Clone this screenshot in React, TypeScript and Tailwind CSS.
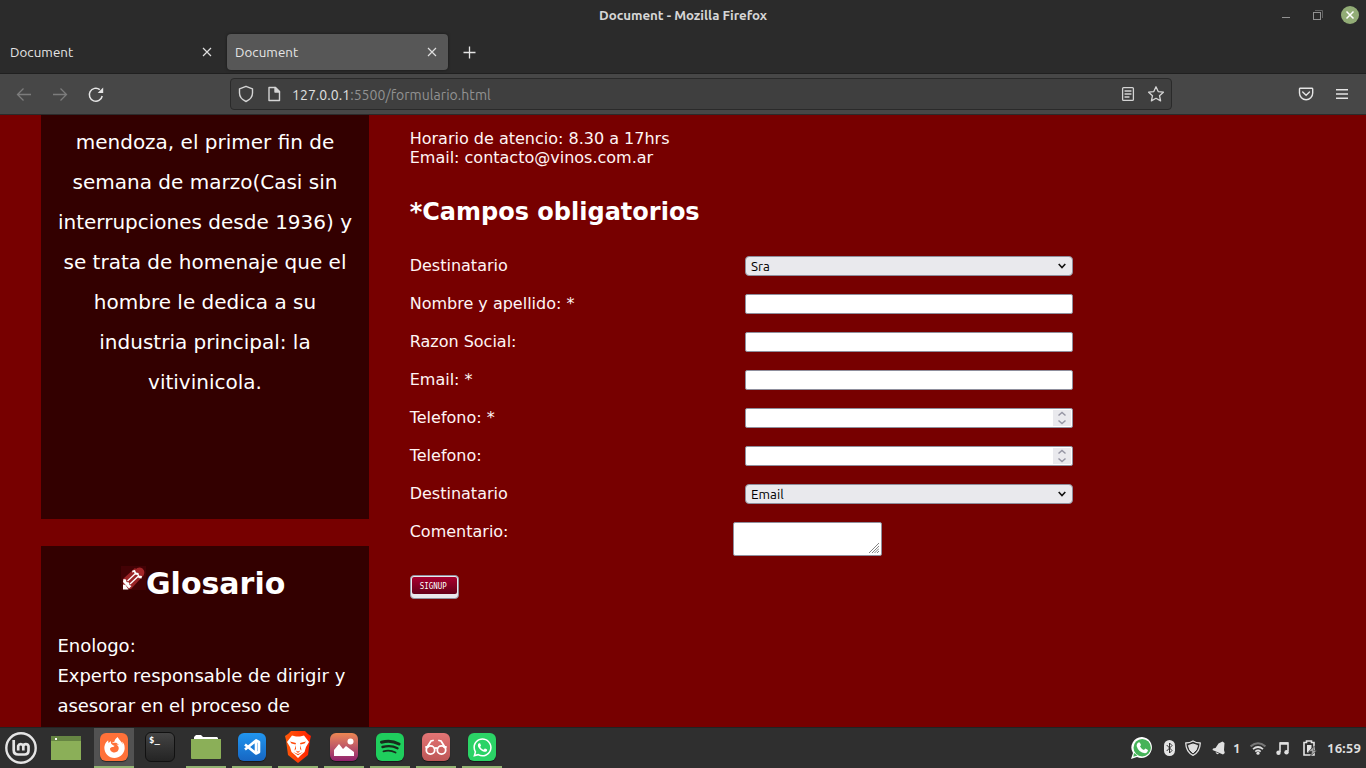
import React from "react";
import { FaWhatsapp } from "react-icons/fa";
import { SiFirefoxbrowser } from "react-icons/si";

const uiFont = "font-['Ubuntu','Noto_Sans',sans-serif]";

function Cross({ className }: { className: string }) {
  return (
    <svg className={className} viewBox="0 0 10 10" fill="none" stroke="currentColor" strokeWidth="1.2">
      <path d="M1 1L9 9M9 1L1 9" />
    </svg>
  );
}

function TitleBar() {
  return (
    <div className="flex h-[30px] items-center">
      <div className="w-[200px]" />
      <div className="flex-1 pt-px text-center text-[13.333px] font-semibold leading-[30px] text-[#d6d6d6]">
        <span className="tracking-[-0.03px]">Document - Mozilla Firefox</span>
      </div>
      <div className="flex w-[200px] items-center justify-end pr-[7px]">
        <svg className="h-[18px] w-[78px]" viewBox="0 0 78 18" fill="none">
          <path d="M1 11.500H9" stroke="#929292" />
          <path d="M34 4.500H41.500V12" stroke="#626262" />
          <rect x="32.500" y="6.500" width="7" height="7" stroke="#929292" />
          <circle cx="69" cy="9" r="9" fill="#92ac76" />
          <path d="M65.500 5.500L72.500 12.500M72.500 5.500L65.500 12.500" stroke="#fff" strokeWidth="1.500" />
        </svg>
      </div>
    </div>
  );
}

function Tab({ active }: { active?: boolean }) {
  return (
    <div
      className={
        active
          ? "flex h-9 w-[221px] items-center justify-between rounded-[4px] bg-[#575757] pl-2 pr-[11px] shadow-[0_0_3px_rgba(0,0,0,0.5)]"
          : "flex h-9 w-[221px] items-center justify-between pl-2 pr-[11px]"
      }
    >
      <span className="pt-px text-[13.333px] tracking-[0.08px] text-[#e6e6e6]">Document</span>
      <Cross className="size-[10px] text-[#dedede]" />
    </div>
  );
}

function NavBar() {
  return (
    <div className="flex h-[41px] items-center border-b border-[#2b2b2b] bg-[#474747] pr-4 text-[#dddddd]">
      <svg className="h-5 w-[230px]" viewBox="0 0 230 20" fill="none" strokeWidth="1.3">
        <path d="M31 10.500H17.500M23.500 4.500L17.500 10.500L23.500 16.500" stroke="#7c7c7c" />
        <path d="M53 10.500H66.500M60.500 4.500L66.500 10.500L60.500 16.500" stroke="#7c7c7c" />
        <path d="M102.200 12A6.500 6.500 0 1 1 99.800 5.600" stroke="#e6e6e6" strokeWidth="1.5" />
        <path d="M103.200 3.500V9H97.700Z" fill="#e6e6e6" />
      </svg>
      <div className="flex h-8 w-[942px] items-center rounded-[4px] border border-[#2a2a2a] bg-[#3f3f3f]">
        <svg className="h-5 w-[61px]" viewBox="0 0 61 20" fill="none" stroke="#d4d4d4" strokeWidth="1.400" strokeLinejoin="round">
          <path d="M15 2.300L21.500 4.800V9C21.500 12.500 19.500 15.500 15 17.500C10.500 15.500 8.500 12.500 8.500 9V4.800Z" />
          <path d="M38 3.500H44.500L48.500 7.500V16.500H38Z" />
          <path d="M44 3.500V8H48.500Z" fill="#d4d4d4" />
        </svg>
        <div className="flex-1 pt-px text-[14px] leading-5 text-[#929292]">
          <span className="tracking-[0.05px]">
            <span className="text-[#e0e0e0]">127.0.0.1</span>:5500/formulario.html
          </span>
        </div>
        <svg className="h-5 w-[56px]" viewBox="0 0 56 20" fill="none" stroke="#d4d4d4" strokeWidth="1.300" strokeLinejoin="round">
          <rect x="7.600" y="3.600" width="10.800" height="12.800" rx="1" />
          <path d="M10 7H16M10 10H16M10 13H14" strokeLinecap="round" />
          <path d="M41 2.800L43.200 7.600L48.400 8.200L44.500 11.700L45.600 16.900L41 14.300L36.400 16.900L37.500 11.700L33.600 8.200L38.800 7.600Z" />
        </svg>
      </div>
      <svg className="ml-auto h-5 w-[52px]" viewBox="0 0 52 20" fill="none" stroke="#e4e4e4" strokeWidth="1.400">
        <path d="M2 4.200H14.200Q14.700 4.200 14.700 5.200V9A6.600 6.800 0 0 1 1.500 9V5.200Q1.500 4.200 2 4.200Z" />
        <path d="M4.700 8L8.100 11.200L11.500 8" strokeLinecap="round" />
        <path d="M38 5.800H50M38 10H50M38 14.200H50" />
      </svg>
    </div>
  );
}

function SelectBox({ value }: { value: string }) {
  return (
    <div className={`flex h-5 w-[328px] items-center justify-between rounded-[4px] border border-[#8f8f9d] bg-[#e9e9ed] pl-[5px] pr-[6px] text-[13.333px] text-black ${uiFont}`}>
      <span className="tracking-[0.05px]">{value}</span>
      <svg className="h-2 w-2" viewBox="0 0 8 8" fill="none" stroke="#111" strokeWidth="1.600">
        <path d="M.7 2L4 5.500L7.300 2" />
      </svg>
    </div>
  );
}

function InputBox({ spinner }: { spinner?: boolean }) {
  return (
    <div className="flex h-5 w-[328px] justify-end rounded-[2px] border border-[#8f8f9d] bg-white p-px">
      {spinner && (
        <svg className="h-4 w-[18px] bg-[#e9e9ed]" viewBox="0 0 18 16" fill="none" stroke="#9696a4" strokeWidth="1.500">
          <path d="M5.500 5.500L9 2.500L12.500 5.500M5.500 10.500L9 13.500L12.500 10.500" />
        </svg>
      )}
    </div>
  );
}

const fields = [
  { label: "Destinatario", value: "Sra" },
  { label: "Nombre y apellido: *" },
  { label: "Razon Social:" },
  { label: "Email: *" },
  { label: "Telefono: *", spinner: true },
  { label: "Telefono:", spinner: true },
  { label: "Destinatario", value: "Email" },
];

function ContactForm() {
  return (
    <section className="ml-[40.700px] pt-[14px] text-base leading-[19px] text-[#fff5f5]">
      <p>Horario de atencio: 8.30 a 17hrs</p>
      <p>Email: contacto@vinos.com.ar</p>
      <h2 className="mt-[31px] text-2xl font-bold leading-7 text-white">*Campos obligatorios</h2>
      <div className="mt-[30px]">
        {fields.map((f, i) => (
          <div key={i} className="flex h-[38px] items-start">
            <label className="w-[335.300px]">{f.label}</label>
            {f.value ? <SelectBox value={f.value} /> : <InputBox spinner={f.spinner} />}
          </div>
        ))}
        <div className="flex h-[53px] items-start">
          <label className="w-[323.300px]">Comentario:</label>
          <div className="flex h-[34px] w-[149px] items-end justify-end rounded-[2px] border border-[#8f8f9d] bg-white p-[2px]">
            <svg className="h-[10px] w-[10px]" viewBox="0 0 10 10" stroke="#777" strokeWidth=".9">
              <path d="M0 10L10 0M3 10L10 3M5.500 10L10 5.500M8 10L10 8" />
            </svg>
          </div>
        </div>
      </div>
      <button className="flex h-6 w-[49px] rounded-[4px] border border-[#8f8f9d] bg-[#e9e9ed] px-px pt-px">
        <span className="flex h-[17px] w-full items-center justify-center rounded-[2px] bg-linear-to-b from-[#a9002e] to-[#650018]">
          <span className="-ml-[2px] scale-x-[.83] whitespace-nowrap font-['DejaVu_Sans_Mono',monospace] text-[9px] leading-[10px] text-white">SIGNUP</span>
        </span>
      </button>
    </section>
  );
}

function Sidebar() {
  return (
    <aside className="ml-[41px] flex w-[328px] flex-col gap-[27px] text-white">
      <div className="flex h-[404px] flex-none flex-col bg-[#330000] pt-[7px] text-center text-xl leading-10">
        <span>mendoza, el primer fin de</span>
        <span>semana de marzo(Casi sin</span>
        <span>interrupciones desde 1936) y</span>
        <span>se trata de homenaje que el</span>
        <span>hombre le dedica a su</span>
        <span>industria principal: la</span>
        <span>vitivinicola.</span>
      </div>
      <div className="flex-none bg-[#330000] pb-10 pl-[16.400px]">
        <div className="flex h-[85px] items-start pl-[63.600px] pt-5">
          <svg className="h-6 w-[25px] bg-[#430205]" viewBox="0 0 25 24">
            <path d="M2 13L14 2L22 10L10 23H2Z" fill="#9a2427" />
            <path d="M14 4Q17.500 0 21.500 2.500Q25 6 22 10.500Z" fill="#a32528" />
            <path d="M2 23.500V18.500L4.500 19L7.500 23.500Z" fill="#fff" />
            <path d="M2.500 13L5 13.500L5.500 16L8 16.500L8.500 19L10.500 20L8 22.500L2 16Z" fill="#fff" />
            <path d="M11.500 4.500L14 4L15 6.500L17.500 7L18 9.500L21 10L20.500 12.500L17.500 12L16.500 9L14 8.500L13 6L11 6.500Z" fill="#fff" />
            <path d="M6.500 15L14.500 7.500M9 18L17.500 10" fill="none" stroke="#fff" strokeWidth="1.300" />
          </svg>
          <h2 className="text-[30px] font-bold leading-[35px]">Glosario</h2>
        </div>
        <div className="flex flex-col text-lg leading-[30px]">
          <span>Enologo:</span>
          <span>Experto responsable de dirigir y</span>
          <span>asesorar en el proceso de</span>
        </div>
      </div>
    </aside>
  );
}

function Slot({ open, active, children }: { open?: boolean; active?: boolean; children: React.ReactNode }) {
  const border = open ? "border-[#92b372]" : "border-transparent";
  const bg = active ? "bg-[#525252]" : "";
  return <div className={`flex h-10 w-10 items-center justify-center border-b-2 ${border} ${bg}`}>{children}</div>;
}

const tile = "flex size-7 items-center justify-center rounded-[6px] shadow-[0_1px_1px_rgba(0,0,0,0.5)]";

function TaskBar() {
  return (
    <footer className={`flex h-[41px] items-end border-t border-[#232323] bg-[#2f2f2f] ${uiFont}`}>
      <div className="flex h-10 w-[46px] items-center pl-[5px]">
        <svg className="size-8" viewBox="0 0 32 32" fill="none" stroke="#e5e5e5" strokeLinejoin="round">
          <circle cx="16" cy="16" r="14.700" strokeWidth="2.400" />
          <path d="M8.700 8V18Q8.700 22.500 13.200 22.500H19.500Q23.500 22.500 23.500 18.500V14A2.700 2.700 0 0 0 18.300 14V18.500M18.300 14A2.700 2.700 0 0 0 13.200 14V18.500" strokeWidth="2.700" />
        </svg>
      </div>
      <div className="mr-2 flex">
        <Slot>
          <svg className="mt-[2px] h-6 w-[30px]" viewBox="0 0 30 24">
            <path d="M0 0H30V24H0Z" fill="#8baf58" />
            <path d="M0 0H30V5H0Z" fill="#668543" />
            <path d="M4 2H6V4H4Z" fill="#fff" />
          </svg>
        </Slot>
      </div>
      <div className="flex gap-[6px]">
        <Slot open active>
          <div className={`${tile} bg-[#ff7139]`}>
            <SiFirefoxbrowser className="size-[21px] text-white" />
          </div>
        </Slot>
        <Slot>
          <div className="flex size-[30px] items-start rounded-[6px] border border-[#111] bg-linear-to-b from-[#444] to-[#242424] pl-[3px] pt-[2px] font-['DejaVu_Sans_Mono',monospace] text-[9px] font-bold leading-[10px] text-white">
            <span>$_</span>
          </div>
        </Slot>
        <Slot open>
          <svg className="h-6 w-[30px]" viewBox="0 0 30 24">
            <path d="M3 6V2L5 0H10L12 2H26L27 3V7H3Z" fill="#fff" />
            <path d="M0 4H30V23Q30 24 29 24H1Q0 24 0 23Z" fill="#8baf58" />
          </svg>
        </Slot>
        <Slot open>
          <div className={`${tile} bg-linear-to-b from-[#2196ef] to-[#1766c3]`}>
            <svg className="size-[18px]" viewBox="0 0 18 18" fill="none" stroke="#fff" strokeWidth="2.600" strokeLinejoin="round">
              <path d="M13 2.500L16 4V14L13 15.500L2 6.500M2 11.500L13 2.500V15.500" />
            </svg>
          </div>
        </Slot>
        <Slot open>
          <svg className="h-8 w-[28px]" viewBox="0 0 28 32">
            <defs>
              <linearGradient id="brave">
                <stop stopColor="#ff5a0a" />
                <stop offset="1" stopColor="#ff2000" />
              </linearGradient>
            </defs>
            <path d="M7 0H21L24 3L27 5L26 9L24 24L14 32L4 24L2 9L1 5L4 3Z" fill="url(#brave)" />
            <path d="M8 4.500L12 5.500H16L20 4.500L25 11L22 16L20.500 21L17 24L14 27L11 24L7.500 21L6 16L3 11Z" fill="#fff" />
            <path d="M6 10.500L12 12L11.500 13.500L7.500 12.500ZM22 10.500L16 12L16.500 13.500L20.500 12.500ZM11.500 14L12 18L10.500 19.500L11 17ZM16.500 14L16 18L17.500 19.500L17 17ZM11.500 19.500L14 20.500L16.500 19.500L14 22ZM9 21L14 23L19 21L14 24.300Z" fill="#ff4a0c" />
          </svg>
        </Slot>
        <Slot open>
          <div className={`${tile} bg-linear-to-b from-[#ed8751] to-[#91206d]`}>
            <svg className="size-5" viewBox="0 0 20 20" fill="#fff">
              <path d="M0 19V13L5 7L9 12L12 9L20 15V19Z" />
              <circle cx="16.500" cy="4.500" r="3" />
            </svg>
          </div>
        </Slot>
        <Slot open>
          <div className={`${tile} bg-[#1fce5d]`}>
            <svg className="size-[22px]" viewBox="0 0 22 22" fill="none" stroke="#182c1c" strokeLinecap="round">
              <path d="M2.500 6.200Q12 3.500 20 8" strokeWidth="3" />
              <path d="M3.500 11Q12 8.700 18.500 12.200" strokeWidth="2.400" />
              <path d="M4.500 15.300Q11 13.600 16.500 16.500" strokeWidth="1.900" />
            </svg>
          </div>
        </Slot>
        <Slot open>
          <div className={`${tile} bg-linear-to-b from-[#e47575] to-[#bd5656]`}>
            <svg className="h-[18px] w-[22px]" viewBox="0 0 22 18" fill="none" stroke="#fff" strokeWidth="1.800" strokeLinecap="round">
              <circle cx="5.500" cy="12" r="4.200" />
              <circle cx="16.500" cy="12" r="4.200" />
              <path d="M9.500 10.500Q11 9.300 12.500 10.500M1.500 10L6 3L8 2.500M20.500 10L16 3L14 2.500M1 9H3M19 9H21" />
            </svg>
          </div>
        </Slot>
        <Slot open>
          <div className={`${tile} bg-[#2bd366]`}>
            <FaWhatsapp className="size-[21px] text-white" />
          </div>
        </Slot>
      </div>
      <div className="ml-auto flex h-10 items-center pr-[5px] text-[#dedede]">
        <svg className="mr-[11px] size-[22px]" viewBox="0 0 22 22">
          <path d="M11.200 0A10.500 10.500 0 1 1 6 20L0 22L2 16A10.500 10.500 0 0 1 11.200 0Z" fill="#fff" />
          <circle cx="11.200" cy="10.700" r="8.700" fill="#45b358" />
          <path d="M3 16L2.300 19.700L6.500 18.500Z" fill="#45b358" />
          <path d="M7.200 5.500L8.800 5.400L10 8L9 9.500Q10.500 12.200 13 13L14.300 11.600L17 13Q16.500 16 14 16.200Q7.500 15.500 5.600 9Q5.500 6.800 7.200 5.500Z" fill="#fff" />
        </svg>
        <svg className="mr-[10px] h-4 w-[11px]" viewBox="0 0 11 16">
          <rect width="11" height="16" rx="5.500" fill="#e4e4e4" />
          <path d="M2.700 5L8 10.500L5.500 13V3L8 5.500L2.700 11" stroke="#2f2f2f" fill="none" />
        </svg>
        <svg className="mr-[11px] size-4" viewBox="0 0 16 16" fill="none" stroke="#e0e0e0" strokeLinejoin="round">
          <path d="M8 1Q11 3 15.300 3Q15 12 8 15.300Q1 12 .7 3Q5 3 8 1Z" strokeWidth="1.300" />
          <path d="M8 4L12.500 5.500Q12 10.500 8 13Q4 10.500 3.500 5.500Z" fill="#e0e0e0" />
        </svg>
        <svg className="mr-[8px] h-[14px] w-[13px]" viewBox="0 0 13 14" fill="#e0e0e0">
          <path d="M10.500 .5L12.500 2L12 9L12.800 12L11 13.500L.5 9L1 7.500L3.500 7L6.500 2.500Z" />
          <path d="M3.500 11L7 12.500Q5 14.500 3.500 11Z" />
        </svg>
        <span className="mr-[10px] w-[7px] pt-px text-[13.333px] font-bold">1</span>
        <svg className="mr-[10px] h-[13px] w-4" viewBox="0 0 16 13" fill="none">
          <path d="M.6 4.400Q8-2 15.400 4.400" stroke="#777" strokeWidth="2" />
          <path d="M3 7.100Q8 2.900 13 7.100M5.300 9.600Q8 7.300 10.700 9.600" stroke="#e0e0e0" strokeWidth="1.700" />
          <circle cx="8" cy="11.200" r="1.600" fill="#e0e0e0" />
        </svg>
        <svg className="mr-[14px] h-[13px] w-[13px]" viewBox="0 0 13 13">
          <path d="M4 10V1H12V9.500" fill="none" stroke="#e0e0e0" strokeWidth="1.600" />
          <path d="M4 1.500H12" stroke="#e0e0e0" strokeWidth="2.500" />
          <circle cx="2.500" cy="10.700" r="2.200" fill="#e0e0e0" />
          <circle cx="10.500" cy="10.200" r="2.200" fill="#e0e0e0" />
        </svg>
        <svg className="mr-[10px] h-4 w-[14px]" viewBox="0 0 14 16">
          <path d="M1 2.500H3.500V1H8.500V2.500H11V15H1Z" fill="none" stroke="#e5e5e5" strokeWidth="1.600" />
          <path d="M4 5H8.500V8L5.500 12.500H4Z" fill="#e5e5e5" />
          <path d="M11.500 6L5.500 11.500H9L7.500 16L14 10.500H10.500Z" fill="#a5a5a5" stroke="#2f2f2f" strokeWidth=".5" />
        </svg>
        <span className="w-[34px] whitespace-nowrap pt-px text-[13.333px] font-bold tracking-[0.15px]">16:59</span>
      </div>
    </footer>
  );
}

export default function App() {
  return (
    <div className="flex h-screen w-full flex-col overflow-hidden bg-[#2b2b2b] font-['DejaVu_Sans',sans-serif]">
      <header className={`flex-none ${uiFont}`}>
        <TitleBar />
        <div className="flex h-11 items-start gap-1 border-b border-[#202020] pl-[2px] pt-1">
          <Tab />
          <Tab active />
          <svg className="ml-[11px] mt-3 size-[13px]" viewBox="0 0 13 13" stroke="#e4e4e4" strokeWidth="1.300">
            <path d="M6.500 .5V12.500M.5 6.500H12.500" />
          </svg>
        </div>
        <NavBar />
      </header>
      <main className="flex min-h-0 flex-1 items-start overflow-hidden bg-[#770000]">
        <Sidebar />
        <ContactForm />
      </main>
      <TaskBar />
    </div>
  );
}
